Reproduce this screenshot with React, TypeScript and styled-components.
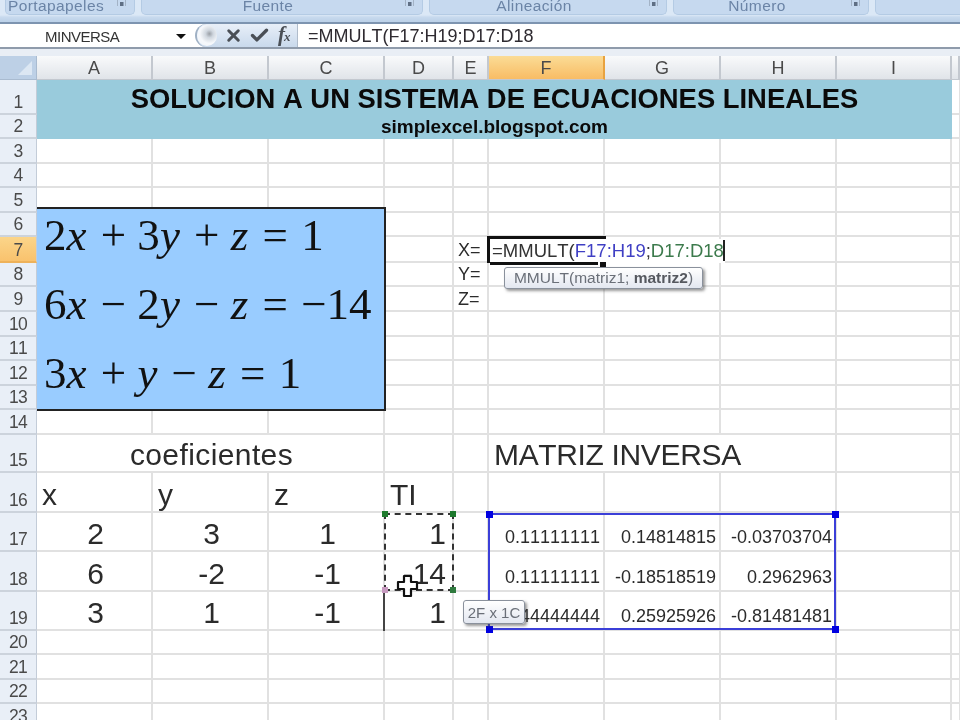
import React from 'react';
import styled, { createGlobalStyle } from 'styled-components';
import { X, Check } from 'lucide-react';

const COLUMN_WIDTHS = [37, 116, 116, 116, 69, 35, 116, 116, 116, 115, 8];
const ROW_HEIGHTS = [24, 35, 24, 25, 24, 25, 24, 26, 24, 25, 25, 24, 25, 24, 25, 38, 40, 39, 40, 39, 24, 25, 24, 25];
const COLUMNS = ['A', 'B', 'C', 'D', 'E', 'F', 'G', 'H', 'I', ''];

const sheetTemplate = `
  grid-template-columns: ${COLUMN_WIDTHS.map((w) => `${w}px`).join(' ')};
  grid-template-rows: ${ROW_HEIGHTS.map((h) => `${h}px`).join(' ')};
`;

type Align = 'left' | 'center' | 'right';
type Size = 'big' | 'small' | 'label';

interface CellData {
  text?: React.ReactNode;
  span?: number;
  align?: Align;
  size?: Size;
  banner?: boolean;
  bold?: number;
  spacing?: number;
}

const CELLS: Record<string, CellData> = {
  A1: { text: 'SOLUCION A UN SISTEMA DE ECUACIONES LINEALES', span: 9, align: 'center', banner: true, bold: 27.4 },
  A2: { text: 'simplexcel.blogspot.com', span: 9, align: 'center', banner: true, bold: 19 },
  E7: { text: 'X=', size: 'label' },
  E8: { text: 'Y=', size: 'label' },
  E9: { text: 'Z=', size: 'label' },
  A15: { text: 'coeficientes', span: 3, align: 'center', size: 'big', spacing: 0.4 },
  F15: { text: 'MATRIZ INVERSA', span: 3, size: 'big', spacing: -0.35 },
  A16: { text: 'x', size: 'big' },
  B16: { text: 'y', size: 'big' },
  C16: { text: 'z', size: 'big' },
  D16: { text: 'TI', size: 'big' },
  A17: { text: '2', align: 'center', size: 'big' },
  B17: { text: '3', align: 'center', size: 'big' },
  C17: { text: '1', align: 'center', size: 'big' },
  D17: { text: '1', align: 'right', size: 'big' },
  A18: { text: '6', align: 'center', size: 'big' },
  B18: { text: '-2', align: 'center', size: 'big' },
  C18: { text: '-1', align: 'center', size: 'big' },
  D18: { text: '-14', align: 'right', size: 'big' },
  A19: { text: '3', align: 'center', size: 'big' },
  B19: { text: '1', align: 'center', size: 'big' },
  C19: { text: '-1', align: 'center', size: 'big' },
  D19: { text: '1', align: 'right', size: 'big' },
  F17: { text: '0.11111111', align: 'right', size: 'small' },
  G17: { text: '0.14814815', align: 'right', size: 'small' },
  H17: { text: '-0.03703704', align: 'right', size: 'small' },
  F18: { text: '0.11111111', align: 'right', size: 'small' },
  G18: { text: '-0.18518519', align: 'right', size: 'small' },
  H18: { text: '0.2962963', align: 'right', size: 'small' },
  F19: { text: '0.44444444', align: 'right', size: 'small' },
  G19: { text: '0.25925926', align: 'right', size: 'small' },
  H19: { text: '-0.81481481', align: 'right', size: 'small' },
};

const GlobalStyle = createGlobalStyle`
  html, body {
    margin: 0;
    height: 100%;
    overflow: hidden;
    background: #fff;
  }
  body {
    font-family: "Liberation Sans", Arial, sans-serif;
    font-kerning: none;
  }
`;

const Page = styled.div`
  width: 960px;
  height: 720px;
  overflow: hidden;
  display: flex;
  flex-direction: column;
  background: #fff;
  filter: blur(0.55px);
`;

const Ribbon = styled.div`
  height: 24px;
  flex: none;
  display: flex;
  gap: 6px;
  padding: 0 0 0 5px;
  box-sizing: border-box;
  background: linear-gradient(#dbe8f6 0, #dbe8f6 15px, #c8daee 17px, #bdd2e9 21px);
  border-bottom: 2px solid #7d94b0;
`;

const RibbonGroup = styled.div<{ $width: number }>`
  flex: none;
  width: ${(p) => p.$width}px;
  height: 15px;
  position: relative;
  overflow: hidden;
  display: flex;
  justify-content: center;
  align-items: flex-end;
  padding-right: 28px;
  background: #c6d9ef;
  border: 1px solid #b4cbe4;
  border-top: none;
  border-radius: 0 0 5px 5px;
  box-sizing: border-box;
  color: #6b84a6;
  font-size: 15.5px;
  letter-spacing: 0.4px;
  line-height: 17px;
`;

const Launcher = styled.svg`
  position: absolute;
  right: 6px;
  top: 0;
`;

const FormulaBar = styled.div`
  height: 25px;
  flex: none;
  display: flex;
  align-items: stretch;
  background: #fff;
  border-bottom: 2px solid #8f9bab;
  box-sizing: border-box;
`;

const NameBox = styled.div`
  width: 195px;
  flex: none;
  display: flex;
  align-items: center;
  justify-content: space-between;
  padding: 1px 9px 0 45px;
  box-sizing: border-box;
  font-size: 15px;
  letter-spacing: -0.5px;
  color: #333;
`;

const DropArrow = styled.span`
  width: 0;
  height: 0;
  border-left: 5px solid transparent;
  border-right: 5px solid transparent;
  border-top: 5px solid #111;
`;

const FormulaTools = styled.div`
  width: 103px;
  flex: none;
  display: flex;
  align-items: center;
  gap: 6px;
  box-sizing: border-box;
  background: linear-gradient(#e8eff8, #c9d9ec);
  border-radius: 14px 0 0 14px;
  border-left: 2px solid #9fb0c4;
  border-right: 1px solid #b0bccb;
  color: #4a4f56;
`;

const Knob = styled.span`
  width: 20px;
  height: 21px;
  margin-right: 1px;
  flex: none;
  border-radius: 50%;
  background: radial-gradient(circle at 62% 42%, #9a9fa6 0, #cfd6de 22%, #f6f8fb 55%, #eef3f9 100%);
`;

const FxLabel = styled.span`
  font-family: "Liberation Serif", serif;
  font-style: italic;
  font-weight: 700;
  font-size: 21px;
  line-height: 22px;
  margin-left: 2px;
  color: #4a4f56;

  small {
    font-size: 13px;
    margin-left: -1px;
  }
`;

const FormulaText = styled.div`
  flex: 1;
  display: flex;
  align-items: center;
  padding: 1px 0 0 10px;
  font-size: 18px;
  color: #2e2a30;
`;

const Gap = styled.div`
  height: 7px;
  flex: none;
  background: #e9eef5;
`;

const Sheet = styled.div`
  position: relative;
  flex: none;
  display: grid;
  ${sheetTemplate}
`;

const Corner = styled.div`
  position: relative;
  background: #bdd0e6;
  border-right: 1px solid #a9bbd0;
  border-bottom: 1px solid #a9bbd0;
  box-sizing: border-box;

  &::after {
    content: '';
    position: absolute;
    right: 4px;
    bottom: 4px;
    border-left: 14px solid transparent;
    border-bottom: 14px solid #dce7f3;
  }
`;

const ColumnHead = styled.div<{ $active?: boolean }>`
  display: flex;
  align-items: center;
  justify-content: center;
  box-sizing: border-box;
  padding-top: 1px;
  font-size: 18px;
  color: #4a4a4a;
  background: ${(p) =>
    p.$active ? 'linear-gradient(#fbdc96, #f8bc64)' : 'linear-gradient(#f9fafb, #e0e4e9)'};
  border-right: 2px solid ${(p) => (p.$active ? '#e8a23f' : '#c3c8cf')};
  border-bottom: 1px solid #c3c8cf;
`;

const RowHead = styled.div<{ $active?: boolean }>`
  display: flex;
  align-items: flex-end;
  justify-content: center;
  box-sizing: border-box;
  padding-bottom: 1px;
  font-size: 17.5px;
  line-height: 20px;
  letter-spacing: -0.7px;
  color: #4a4a4a;
  background: ${(p) => (p.$active ? 'linear-gradient(#fbd58a, #f9c26d)' : '#e9eff7')};
  border-right: 1px solid #c3ccd8;
  border-bottom: 2px solid ${(p) => (p.$active ? '#eeb25a' : '#ccd3dc')};
`;

const sizes: Record<Size, string> = { big: '30px', small: '18px', label: '18px' };
const justify: Record<Align, string> = { left: 'flex-start', center: 'center', right: 'flex-end' };
const bottomPad: Record<Size, number> = { big: 1, small: 2, label: 0 };

const rightPad = (size?: Size, align?: Align) => {
  if (size !== 'big') return 3;
  return align === 'center' ? 2 : 6;
};

const Cell = styled.div<{
  $span?: number;
  $align?: Align;
  $size?: Size;
  $banner?: boolean;
  $bold?: number;
  $spacing?: number;
}>`
  grid-column: span ${(p) => p.$span ?? 1};
  display: flex;
  align-items: ${(p) => (p.$banner ? 'center' : 'flex-end')};
  justify-content: ${(p) => justify[p.$align ?? 'left']};
  min-width: 0;
  padding: ${(p) =>
    p.$banner
      ? `${(p.$bold ?? 0) > 20 ? 3 : 0}px 0 0`
      : `0 ${rightPad(p.$size, p.$align)}px ${bottomPad[p.$size ?? 'small']}px ${p.$size === 'big' ? 5 : 4}px`};
  box-sizing: border-box;
  white-space: nowrap;
  color: ${(p) => (p.$banner ? '#0a0a0a' : '#2b2b2b')};
  font-size: ${(p) => (p.$bold ? `${p.$bold}px` : sizes[p.$size ?? 'small'])};
  font-weight: ${(p) => (p.$bold ? 700 : 400)};
  letter-spacing: ${(p) => p.$spacing ?? 0}px;
  line-height: ${(p) => (p.$size === 'big' ? '30px' : 'normal')};
  background: ${(p) => (p.$banner ? '#99cbdc' : '#fff')};
  border-right: ${(p) => (p.$banner ? 'none' : '2px solid #e1e1e1')};
  border-bottom: ${(p) => (p.$banner ? 'none' : '2px solid #e1e1e1')};
`;

const Layer = styled.div`
  position: absolute;
  inset: 0;
  display: grid;
  ${sheetTemplate}
  pointer-events: none;
`;

const EquationBox = styled.div`
  position: absolute;
  left: 37px;
  top: 151px;
  width: 349px;
  height: 204px;
  box-sizing: border-box;
  background: #99ccff;
  border: 2px solid #222;
  border-left: none;
  display: flex;
  flex-direction: column;
  justify-content: space-between;
  padding: 0 0 10px 7px;
  font-family: "Liberation Serif", serif;
  font-size: 45px;
  line-height: 52px;
  color: #111;
  white-space: pre;
`;

const Var = styled.i<{ $gap?: number }>`
  font-style: italic;
  margin-right: ${(p) => p.$gap ?? 3}px;
`;

const Equals = styled.span`
  margin-right: 2px;
`;

const Handle = styled.span<{ $x: 'left' | 'right'; $y: 'top' | 'bottom'; $color: string; $size: number }>`
  position: absolute;
  ${(p) => p.$x}: -${(p) => p.$size / 2 + 1}px;
  ${(p) => p.$y}: -${(p) => p.$size / 2 + 1}px;
  width: ${(p) => p.$size}px;
  height: ${(p) => p.$size}px;
  background: ${(p) => p.$color};
`;

const CopyRange = styled.div`
  grid-column: 5;
  grid-row: 18 / 20;
  position: relative;
  margin: 0 0 1px -1px;
  border: 2px dashed #333;
`;

const RefEdge = styled.div`
  grid-column: 5;
  grid-row: 20;
  margin-left: -2px;
  border-left: 2px solid #444;
`;

const ResultRange = styled.div`
  grid-column: 7 / 10;
  grid-row: 18 / 21;
  position: relative;
  margin: 0 1px 1px -1px;
  border: 2px solid #3b3fd8;
`;

const Editor = styled.div`
  grid-column: 7;
  grid-row: 8;
  position: relative;
  margin: -1px -1px 0 -2px;
  display: flex;
  border-top: 3px solid #111;
  border-left: 3px solid #111;
  font-size: 18.5px;
  color: #333;
  white-space: nowrap;

  &::after {
    content: '';
    position: absolute;
    left: 0;
    right: 8px;
    bottom: -2px;
    border-bottom: 3px solid #111;
  }
`;

const EditorText = styled.div`
  flex: none;
  display: flex;
  align-items: center;
  padding: 0 0 1px 2px;
  background: #fff;
`;

const FillHandle = styled.span`
  position: absolute;
  right: 0;
  bottom: -4px;
  width: 6px;
  height: 5px;
  background: #111;
`;

const RefText = styled.span<{ $color: string }>`
  color: ${(p) => p.$color};
`;

const Caret = styled.span`
  flex: none;
  width: 2px;
  height: 21px;
  margin-left: -1px;
  background: #222;
`;

const Tip = styled.div`
  position: absolute;
  box-sizing: border-box;
  display: flex;
  align-items: center;
  justify-content: center;
  white-space: nowrap;
  color: #6a6f78;
  background: linear-gradient(#ffffff, #e3e7f0);
  border: 1px solid #8a919c;
  border-radius: 3px;
  box-shadow: 2px 2px 3px rgba(70, 70, 70, 0.55);
`;

const ArgsTip = styled(Tip)`
  left: 504px;
  top: 211px;
  width: 199px;
  height: 22px;
  font-size: 15.5px;

  b {
    color: #55585f;
    font-weight: 700;
  }
`;

const SizeTip = styled(Tip)`
  left: 463px;
  top: 544px;
  width: 62px;
  height: 24px;
  font-size: 15px;
`;

const Cursor = styled.svg`
  position: absolute;
  left: 396px;
  top: 518px;
`;

function RibbonLauncher() {
  return (
    <Launcher width="12" height="10" viewBox="0 0 12 10">
      <path d="M1.5 0v6M9.5 0v6" fill="none" stroke="#a3b3c6" strokeWidth="1" />
      <path d="M4 2h3.5v4H4z" fill="#5f6f84" />
    </Launcher>
  );
}

export default function App() {
  const groups: [number, string, boolean][] = [
    [130, 'Portapapeles', true],
    [282, 'Fuente', true],
    [238, 'Alineación', true],
    [196, 'Número', true],
    [90, '', false],
  ];

  const rows: React.ReactNode[] = [];
  for (let r = 1; r <= 23; r++) {
    rows.push(
      <RowHead key={`h${r}`} $active={r === 7}>
        {r}
      </RowHead>
    );
    let skip = 0;
    COLUMNS.forEach((col) => {
      if (skip > 0) {
        skip--;
        return;
      }
      const data = CELLS[`${col}${r}`];
      if (data?.span) skip = data.span - 1;
      if (col === '') {
        rows.push(<Cell key={`e${r}`} />);
        return;
      }
      rows.push(
        <Cell
          key={`${col}${r}`}
          $span={data?.span}
          $align={data?.align}
          $size={data?.size}
          $banner={data?.banner}
          $bold={data?.bold}
          $spacing={data?.spacing}
        >
          {data?.text}
        </Cell>
      );
    });
  }

  return (
    <>
      <GlobalStyle />
      <Page>
        <Ribbon>
          {groups.map(([width, label, launcher], i) => (
            <RibbonGroup key={i} $width={width}>
              {label}
              {launcher && <RibbonLauncher />}
            </RibbonGroup>
          ))}
        </Ribbon>
        <FormulaBar>
          <NameBox>
            MINVERSA
            <DropArrow />
          </NameBox>
          <FormulaTools>
            <Knob />
            <X size={19} strokeWidth={3.8} />
            <Check size={21} strokeWidth={3.8} />
            <FxLabel>
              f<small>x</small>
            </FxLabel>
          </FormulaTools>
          <FormulaText>=MMULT(F17:H19;D17:D18</FormulaText>
        </FormulaBar>
        <Gap />
        <Sheet>
          <Corner />
          {COLUMNS.map((col, i) => (
            <ColumnHead key={i} $active={col === 'F'}>
              {col}
            </ColumnHead>
          ))}
          {rows}
          <Layer>
            <EquationBox>
              <div>
                2<Var>x</Var> + 3<Var>y</Var> + <Var $gap={3}>z</Var> <Equals>=</Equals> 1
              </div>
              <div>
                6<Var>x</Var> − 2<Var>y</Var> − <Var $gap={3}>z</Var> <Equals>=</Equals> −14
              </div>
              <div>
                3<Var>x</Var> + <Var>y</Var> − <Var $gap={3}>z</Var> <Equals>=</Equals> 1
              </div>
            </EquationBox>
            <Editor>
              <EditorText>
                =MMULT(
                <RefText $color="#3f3fc4">F17:H19</RefText>;
                <RefText $color="#3c7a4c">D17:D18</RefText>
                <Caret />
              </EditorText>
              <FillHandle />
            </Editor>
            <ArgsTip>
              MMULT(matriz1;&nbsp;<b>matriz2</b>)
            </ArgsTip>
            <CopyRange>
              <Handle $x="left" $y="top" $color="#1f7a2e" $size={6} />
              <Handle $x="right" $y="top" $color="#1f7a2e" $size={6} />
              <Handle $x="left" $y="bottom" $color="#c79ac0" $size={6} />
              <Handle $x="right" $y="bottom" $color="#2f7a3e" $size={6} />
            </CopyRange>
            <RefEdge />
            <ResultRange>
              <Handle $x="left" $y="top" $color="#0000e0" $size={7} />
              <Handle $x="right" $y="top" $color="#0000e0" $size={7} />
              <Handle $x="left" $y="bottom" $color="#0000e0" $size={7} />
              <Handle $x="right" $y="bottom" $color="#0000e0" $size={7} />
            </ResultRange>
            <SizeTip>2F x 1C</SizeTip>
            <Cursor width="23" height="24" viewBox="0 0 23 24">
              <path
                d="M8 2h7v6h6v7h-6v7H8v-7H2V8h6z"
                fill="#fff"
                stroke="#111"
                strokeWidth="2.2"
                strokeLinejoin="round"
              />
            </Cursor>
          </Layer>
        </Sheet>
      </Page>
    </>
  );
}
